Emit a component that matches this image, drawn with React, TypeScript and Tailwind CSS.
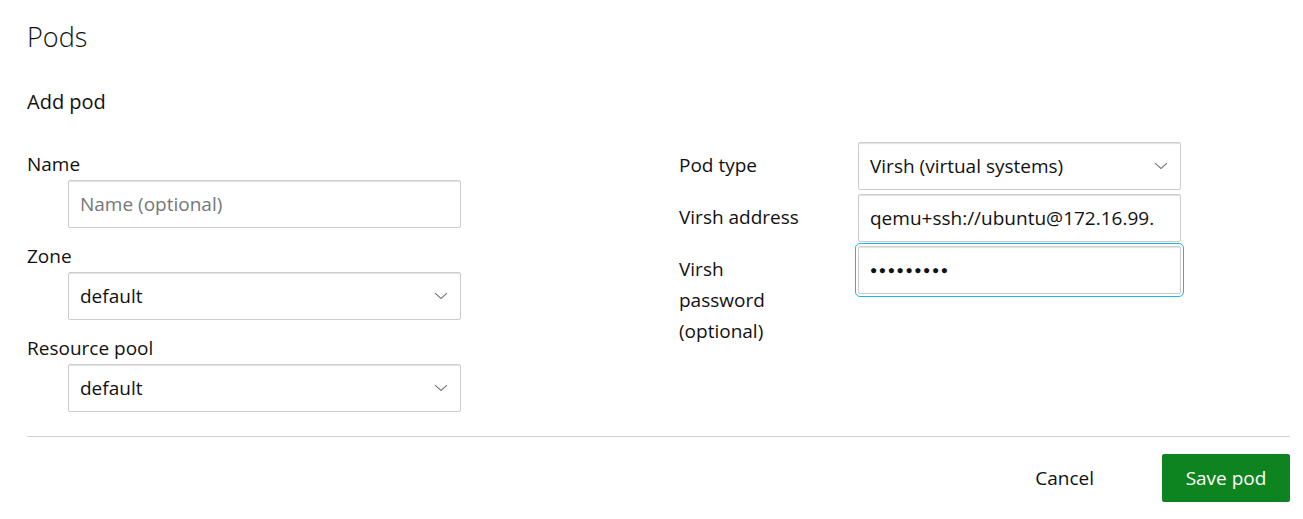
import React from "react";

const font = { fontFamily: '"Open Sans", "Noto Sans", sans-serif' };

function Chevron() {
  return (
    <svg width="14" height="8" viewBox="0 0 14 8" className="absolute right-[13px] top-1/2 -translate-y-1/2" fill="none">
      <path d="M1 1.2 L7 6.5 L13 1.2" stroke="#777" strokeWidth="1.1" />
    </svg>
  );
}

const boxCls =
  "h-[48px] w-full rounded-[2px] border border-[#cdcdcd] bg-white shadow-[inset_0_1px_1px_rgba(0,0,0,0.12)] px-[11px] flex items-center text-[19px] text-[#111] overflow-hidden whitespace-nowrap";

function SelectBox({ value }: { value: string }) {
  return (
    <div className="relative">
      <div className={boxCls}>{value}</div>
      <Chevron />
    </div>
  );
}

export default function App() {
  return (
    <div style={font} className="w-[1303px] h-[519px] bg-white pl-[27px] pr-[13px] text-[#111] overflow-hidden">
      <div className="pt-[19px] h-[55px] text-[27px] leading-[36px] font-light">Pods</div>
      <div className="mt-[32px] text-[20px] leading-[30px] font-normal">Add pod</div>
      <div className="mt-[25px] flex">
        <div className="w-[652px] pt-[7px]">
          <div className="text-[19px] leading-[31px]">Name</div>
          <div className="ml-[41px] w-[393px] mb-[13px]">
            <div className={boxCls}>
              <span className="text-[#777]">Name (optional)</span>
            </div>
          </div>
          <div className="text-[19px] leading-[31px]">Zone</div>
          <div className="ml-[41px] w-[393px] mb-[13px]">
            <SelectBox value="default" />
          </div>
          <div className="text-[19px] leading-[31px]">Resource pool</div>
          <div className="ml-[41px] w-[393px]">
            <SelectBox value="default" />
          </div>
        </div>
        <div className="flex flex-col gap-[4px]">
          <div className="flex">
            <div className="w-[179px] pt-[8px] text-[19px] leading-[31px]">Pod type</div>
            <div className="w-[323px]">
              <SelectBox value="Virsh (virtual systems)" />
            </div>
          </div>
          <div className="flex">
            <div className="w-[179px] pt-[8px] text-[19px] leading-[31px]">Virsh address</div>
            <div className="w-[323px]">
              <div className={boxCls}>qemu+ssh://ubuntu@172.16.99.</div>
            </div>
          </div>
          <div className="flex">
            <div className="w-[179px] pt-[8px] text-[19px] leading-[31px]">
              Virsh
              <br />
              password
              <br />
              (optional)
            </div>
            <div className="w-[323px]">
              <div className={boxCls + " outline outline-1 outline-offset-[2px] outline-[#19b6ee]"}>
                <span className="tracking-[1.6px] text-[12px]">●●●●●●●●●</span>
              </div>
            </div>
          </div>
        </div>
      </div>
      <div className="mt-[24px] h-px bg-[#d4d4d4]" />
      <div className="mt-[17px] flex justify-end items-center">
        <button className="text-[19px] text-[#111] mr-[68px]">Cancel</button>
        <button className="w-[128px] h-[48px] rounded-[2px] bg-[#0e8420] text-white text-[19px]">Save pod</button>
      </div>
    </div>
  );
}
